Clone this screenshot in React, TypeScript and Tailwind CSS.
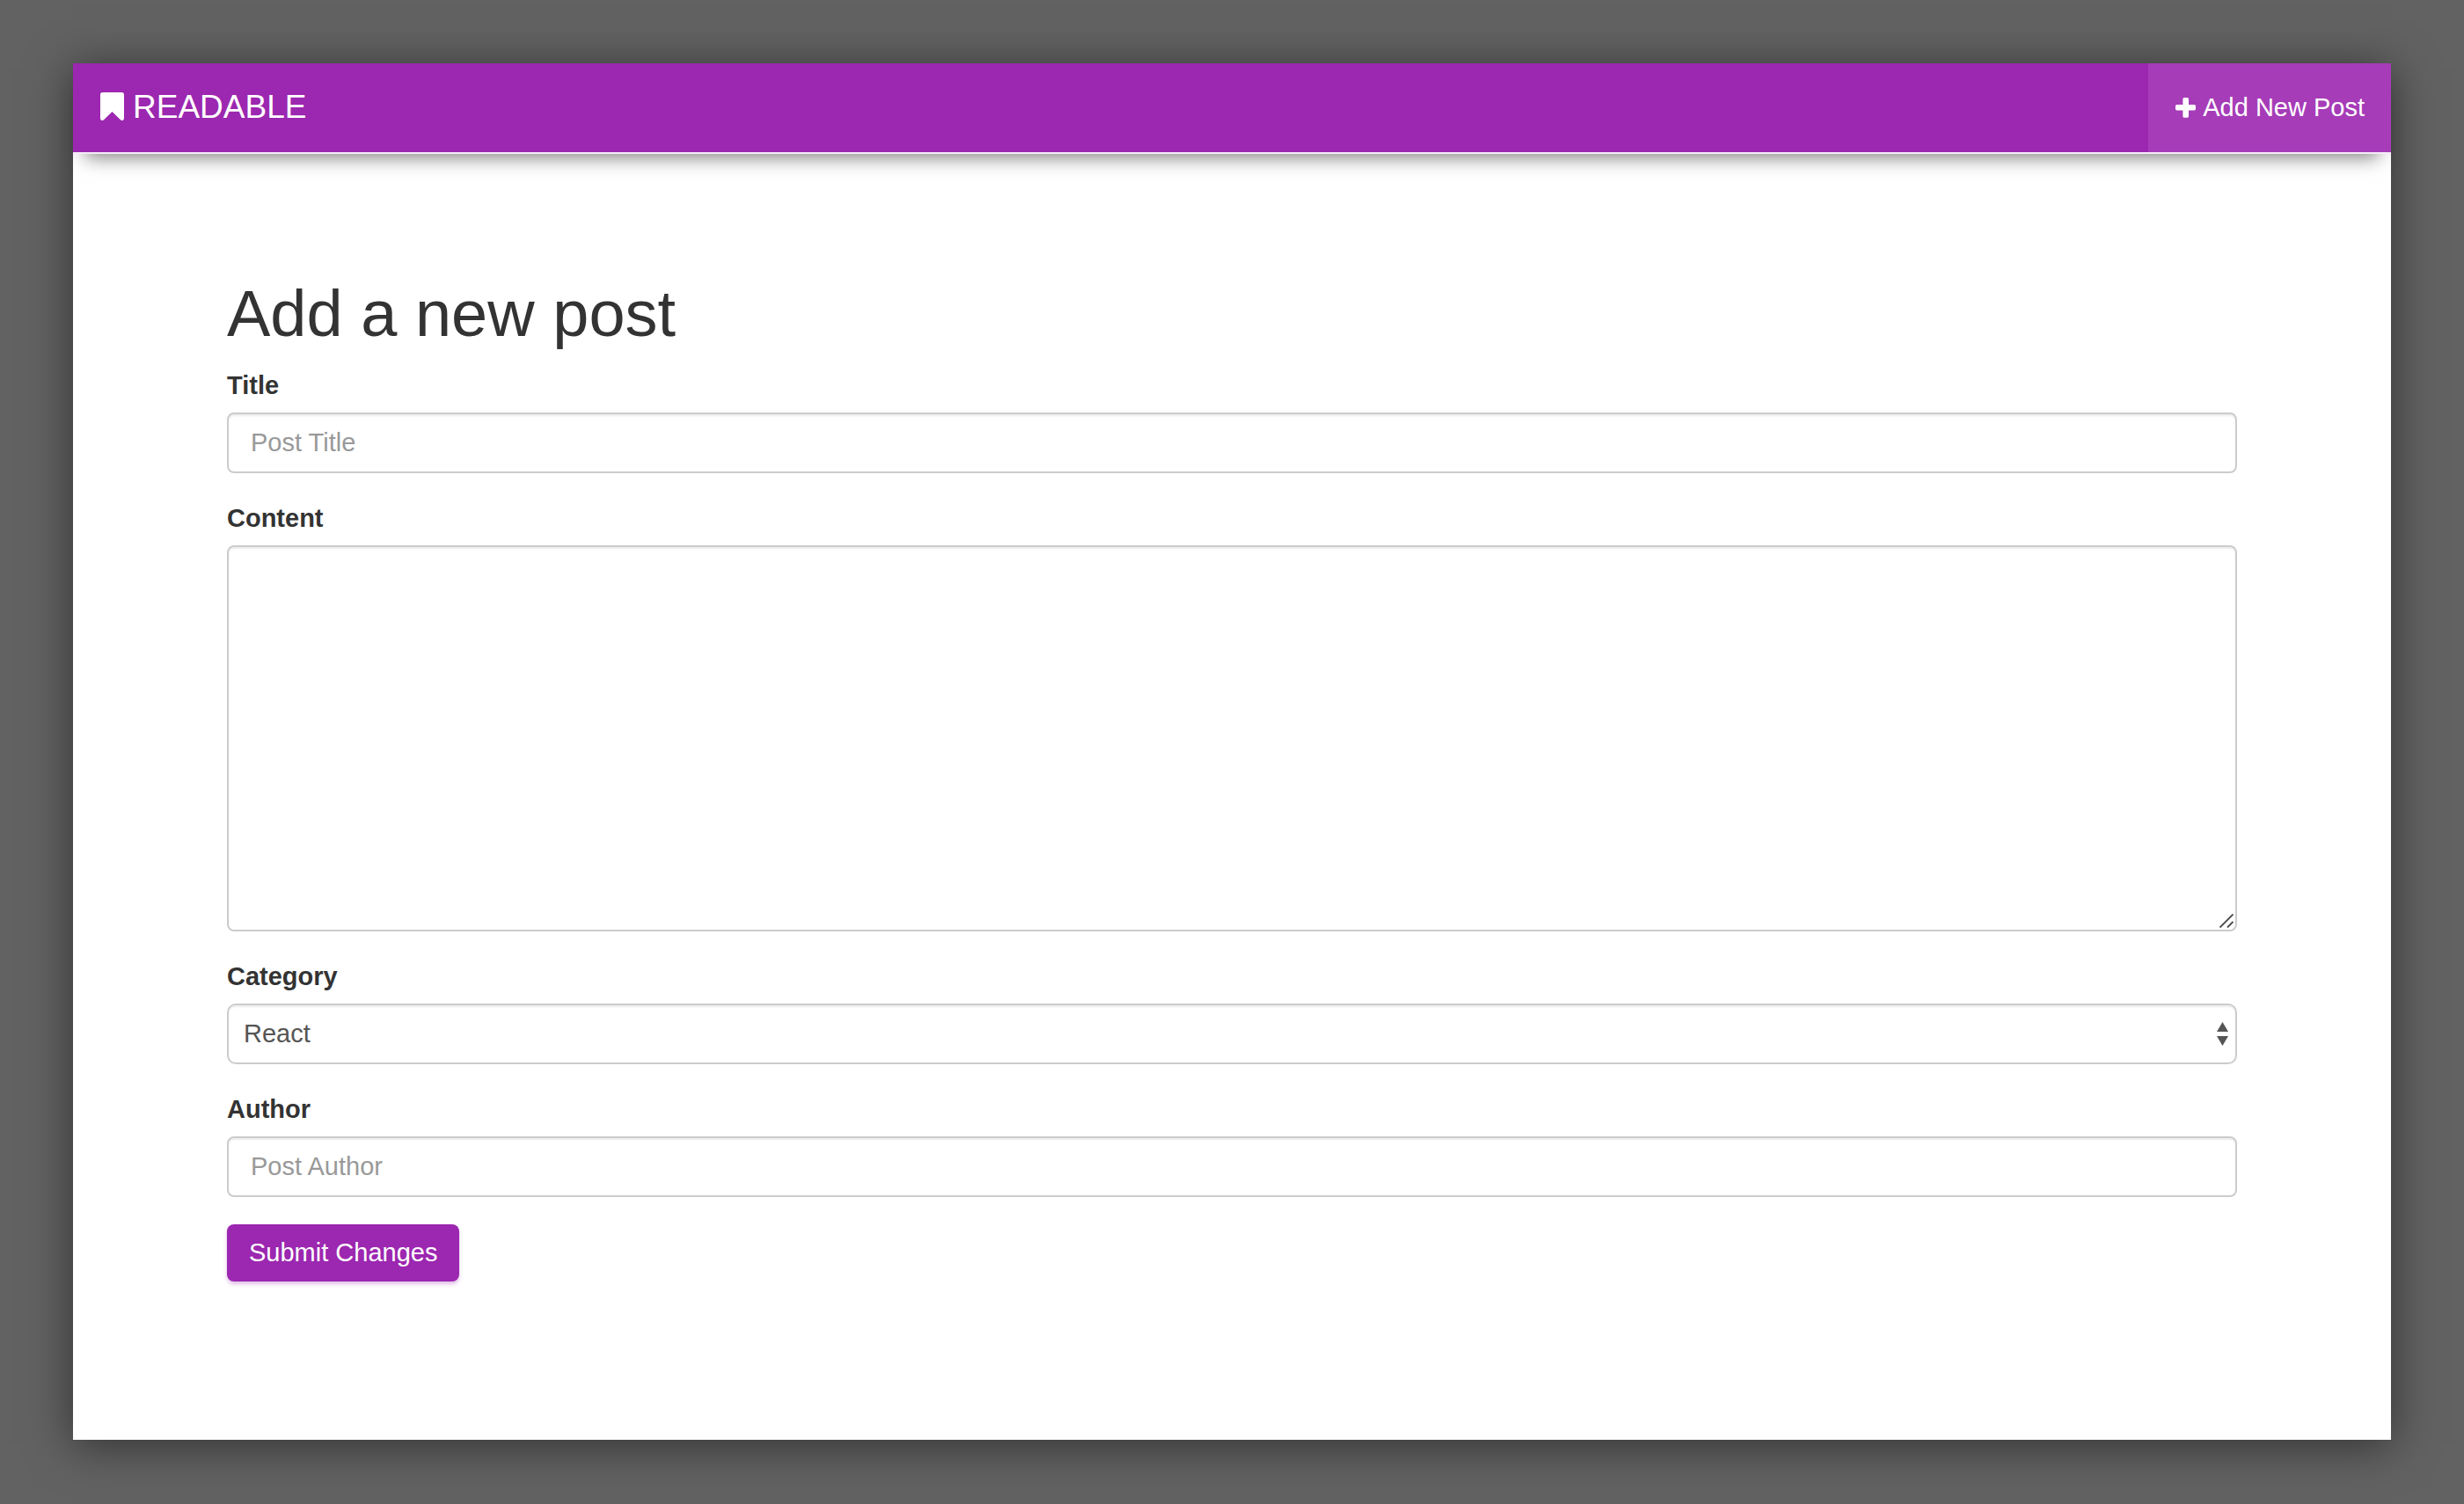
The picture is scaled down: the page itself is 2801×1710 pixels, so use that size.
import type { ReactNode } from "react";

const control =
  "block w-full border-2 border-[#cccccc] bg-white text-[29px] leading-[41px] text-[#555555] shadow-[inset_0_2px_2px_rgba(0,0,0,0.075)] outline-none placeholder:text-[#999999] placeholder:opacity-100";

function BookmarkIcon() {
  return (
    <svg className="h-8 w-[27px]" viewBox="0 0 27 32" fill="currentColor" aria-hidden="true">
      <path d="M2.4 0H24.6C26 0 27 1 27 2.4V29.6C27 31 26 32 24.8 32C24.1 32 23.5 31.7 23 31.2L13.5 22L4 31.2C3.5 31.7 2.9 32 2.2 32C1 32 0 31 0 29.6V2.4C0 1 1 0 2.4 0Z" />
    </svg>
  );
}

function PlusIcon() {
  return (
    <svg className="size-[23px]" viewBox="0 0 23 23" fill="currentColor" aria-hidden="true">
      <path d="M10 0H13.4Q15 0 15 1.6V8H21.4Q23 8 23 9.6V12.8Q23 14.4 21.4 14.4H15V21.2Q15 22.8 13.4 22.8H10Q8.4 22.8 8.4 21.2V14.4H1.6Q0 14.4 0 12.8V9.6Q0 8 1.6 8H8.4V1.6Q8.4 0 10 0Z" />
    </svg>
  );
}

function Field({ id, label, children }: { id: string; label: string; children: ReactNode }) {
  return (
    <div className="mb-[31px]">
      <label htmlFor={id} className="mb-[10px] block text-[29px] leading-[41px] font-bold">
        {label}
      </label>
      {children}
    </div>
  );
}

export default function App() {
  return (
    <div className="flex min-h-screen flex-col bg-[#626262] px-[83px] pt-[72px] pb-[73px] font-['Liberation_Sans',Helvetica,Arial,sans-serif] text-[#333333]">
      <div className="flex flex-1 flex-col bg-white shadow-[0_6px_48px_rgba(0,0,0,0.5)]">
        <header className="border-b-2 border-[#f6ebf8] shadow-[0_18px_20px_-14px_rgba(0,0,0,0.5)]">
          <nav className="flex h-[101px] items-stretch justify-between bg-[#9c27b0] text-white">
            <a href="#home" className="flex items-center gap-[10px] px-[31px] pb-[3px] text-[37px] leading-[41px]">
              <BookmarkIcon />
              READABLE
            </a>
            <a href="#new" className="flex items-center gap-2 bg-[#a63cb8] pr-[30px] pl-[31px] text-[29px] leading-[41px]">
              <PlusIcon />
              Add New Post
            </a>
          </nav>
        </header>
        <main className="px-[175px] pt-[141px]">
          <h1 className="mb-5 text-[74px] leading-[82px]">Add a new post</h1>
          <form onSubmit={(e) => e.preventDefault()}>
            <Field id="title" label="Title">
              <input id="title" type="text" placeholder="Post Title" className={`${control} h-[69px] rounded-lg px-[25px]`} />
            </Field>
            <Field id="content" label="Content">
              <div className="relative">
                <textarea id="content" className={`${control} h-[439px] resize-none rounded-lg px-[25px] py-3`} />
                <svg
                  className="pointer-events-none absolute right-1 bottom-1 size-4"
                  viewBox="0 0 16 16"
                  fill="none"
                  stroke="#444444"
                  strokeWidth="1.8"
                  aria-hidden="true"
                >
                  <path d="M0.5 15.5L15.5 0.5M9 15.5L15.5 9" />
                </svg>
              </div>
            </Field>
            <Field id="category" label="Category">
              <div className="relative">
                <select id="category" className={`${control} h-[69px] appearance-none rounded-[10px] px-[17px]`}>
                  <option>React</option>
                </select>
                <svg
                  className="pointer-events-none absolute top-[21px] right-[10px] h-[27px] w-[13px]"
                  viewBox="0 0 13 27"
                  fill="#555555"
                  aria-hidden="true"
                >
                  <path d="M6.5 0L13 11H0ZM0 16H13L6.5 27Z" />
                </svg>
              </div>
            </Field>
            <Field id="author" label="Author">
              <input id="author" type="text" placeholder="Post Author" className={`${control} h-[69px] rounded-lg px-[25px]`} />
            </Field>
            <button
              type="submit"
              className="rounded-lg bg-[#9c27b0] px-[25px] py-3 text-[29px] leading-[41px] text-white shadow-[0_3px_4px_rgba(156,39,176,0.3)]"
            >
              Submit Changes
            </button>
          </form>
        </main>
      </div>
    </div>
  );
}
